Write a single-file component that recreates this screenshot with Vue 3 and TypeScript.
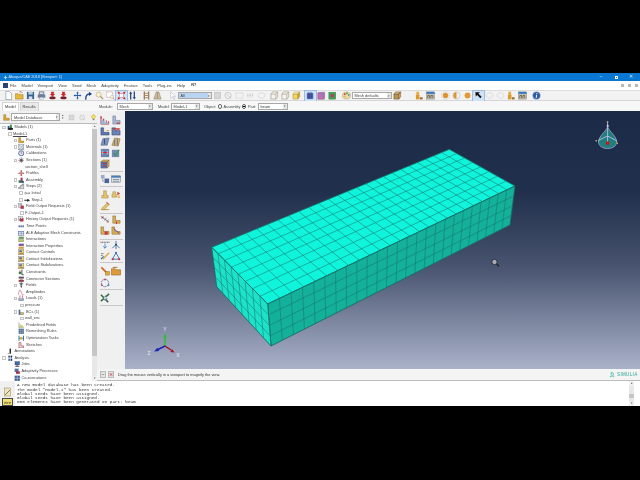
<script setup lang="ts">
type P = [number, number]
function quad(p0: P, p1: P, p2: P, p3: P) {
  const dx1 = p1[0] - p2[0], dx2 = p3[0] - p2[0], sx = p0[0] - p1[0] + p2[0] - p3[0]
  const dy1 = p1[1] - p2[1], dy2 = p3[1] - p2[1], sy = p0[1] - p1[1] + p2[1] - p3[1]
  const den = dx1 * dy2 - dx2 * dy1
  const g = (sx * dy2 - dx2 * sy) / den
  const h = (dx1 * sy - sx * dy1) / den
  const a = p1[0] - p0[0] + g * p1[0], b = p3[0] - p0[0] + h * p3[0]
  const d = p1[1] - p0[1] + g * p1[1], e = p3[1] - p0[1] + h * p3[1]
  return (u: number, v: number): P => {
    const w = g * u + h * v + 1
    return [(a * u + b * v + p0[0]) / w, (d * u + e * v + p0[1]) / w]
  }
}
function face(pts: [P, P, P, P], nu: number, nv: number, fill: string) {
  const m = quad(...pts)
  const segs: { x1: number; y1: number; x2: number; y2: number }[] = []
  const push = (a: P, b: P) => segs.push({ x1: a[0], y1: a[1], x2: b[0], y2: b[1] })
  for (let i = 0; i <= nu; i++) push(m(i / nu, 0), m(i / nu, 1))
  for (let j = 0; j <= nv; j++) push(m(0, j / nv), m(1, j / nv))
  return { points: pts.map((p) => p.join(',')).join(' '), fill, segs }
}
const A: P = [211.7, 247.3], B: P = [449.3, 149.3], C: P = [515, 186], D: P = [267.7, 304]
const Cb: P = [510, 225], Db: P = [271, 346], Ab: P = [216.7, 286.7]
const faces = [
  face([A, B, C, D], 25, 8, '#0ff4db'),
  face([D, C, Cb, Db], 25, 4, '#13b09a'),
  face([A, D, Db, Ab], 8, 4, '#1be2c8'),
]

type Item = { k: 'i' | 's' | 'c'; id?: string; w?: number; on?: boolean; text?: string; blue?: boolean }
const ic = (id: string, on = false): Item => ({ k: 'i', id, on })
const sp = (w = 3): Item => ({ k: 's', w })
const toolbar: Item[] = [
  ic('doc'), ic('folder'), ic('save'), ic('print'), ic('imp'), ic('imp'), sp(),
  ic('pan'), ic('rot'), ic('mag'), ic('boxz'), ic('fit', true), ic('updn'), sp(),
  ic('ladder'), ic('tri'), sp(4), ic('cursor'),
  { k: 'c', text: 'All', w: 34.5, blue: true },
  ic('g1'), ic('g2'), ic('g3'), ic('g4'), ic('g5'), sp(1.5),
  ic('boxw'), ic('boxw'), ic('boxy'), sp(3),
  ic('meshb', true), ic('meshp'), ic('meshg'), sp(3), ic('palette'),
  { k: 'c', text: 'Mesh defaults', w: 40 },
  ic('cube'), sp(11), ic('fig'), ic('vp'), sp(4),
  ic('sph'), ic('hsph'), ic('osph'), ic('blk', true), ic('g5'), ic('g5'), ic('fig'), ic('vp'), sp(3), ic('info'),
]
const menu = ['File', 'Model', 'Viewport', 'View', 'Seed', 'Mesh', 'Adaptivity', 'Feature', 'Tools', 'Plug-ins', 'Help']

type Row = { t: string; l: string; x?: boolean; i?: string; u?: boolean }
const tree: Row[] = [
  { t: 'Models (1)', l: 'l0', x: true, i: 'tmodel' },
  { t: 'Model-1', l: 'lm', x: true, u: true },
  { t: 'Parts (1)', l: 'l2', x: true, i: 'tpart' },
  { t: 'Materials (1)', l: 'l2', x: true, i: 'tmat' },
  { t: 'Calibrations', l: 'l2', i: 'tcal' },
  { t: 'Sections (1)', l: 'l2', x: true, i: 'tsec' },
  { t: 'section_shell', l: 'l3' },
  { t: 'Profiles', l: 'l2', i: 'tprof' },
  { t: 'Assembly', l: 'l2', x: true, i: 'tasm' },
  { t: 'Steps (2)', l: 'l2', x: true, i: 'tstep' },
  { t: 'Initial', l: 'l4', x: true, i: 'tinit' },
  { t: 'Step-1', l: 'l4', x: true, i: 'tstep1' },
  { t: 'Field Output Requests (1)', l: 'l2', x: true, i: 'tout' },
  { t: 'F-Output-1', l: 'l5', x: true },
  { t: 'History Output Requests (1)', l: 'l2', x: true, i: 'thist' },
  { t: 'Time Points', l: 'l2', i: 'ttime' },
  { t: 'ALE Adaptive Mesh Constraints', l: 'l2', i: 'tale' },
  { t: 'Interactions', l: 'l2', i: 'tint' },
  { t: 'Interaction Properties', l: 'l2', i: 'tiprop' },
  { t: 'Contact Controls', l: 'l2', i: 'tcc' },
  { t: 'Contact Initializations', l: 'l2', i: 'tcc' },
  { t: 'Contact Stabilizations', l: 'l2', i: 'tcc' },
  { t: 'Constraints', l: 'l2', i: 'tcon' },
  { t: 'Connector Sections', l: 'l2', i: 'tconn' },
  { t: 'Fields', l: 'l2', x: true, i: 'tfield' },
  { t: 'Amplitudes', l: 'l2', i: 'tamp' },
  { t: 'Loads (1)', l: 'l2', x: true, i: 'tload' },
  { t: 'pressure', l: 'l5', x: true },
  { t: 'BCs (1)', l: 'l2', x: true, i: 'tbc' },
  { t: 'wall_enc', l: 'l5', x: true },
  { t: 'Predefined Fields', l: 'l2', i: 'tpre' },
  { t: 'Remeshing Rules', l: 'l2', i: 'trem' },
  { t: 'Optimization Tasks', l: 'l2', i: 'topt' },
  { t: 'Sketches', l: 'l2', i: 'tsk' },
  { t: 'Annotations', l: 'l0 nox', i: 'tann' },
  { t: 'Analysis', l: 'l0', x: true, i: 'tana' },
  { t: 'Jobs', l: 'l6', i: 'tjob' },
  { t: 'Adaptivity Processes', l: 'l6', i: 'tada' },
  { t: 'Co-executions', l: 'l6', i: 'tco' },
]

const toolGroups: { cls: string; rows: string[][] }[] = [
  { cls: 'g-a', rows: [['s1', 's2'], ['s3', 's4'], ['s5', 's6'], ['s7', 's8'], ['s9']] },
  { cls: 'g-b', rows: [['s10', 's11']] },
  { cls: 'g-c', rows: [['s12', 's13'], ['s14']] },
  { cls: 'g-d', rows: [['s15', 's16'], ['s17', 's18']] },
  { cls: 'g-e', rows: [['s19', 's20'], ['s21', 's22']] },
  { cls: 'g-f', rows: [['s23', 's25'], ['s26']] },
  { cls: 'g-g', rows: [['s24']] },
]

const messages = [
  'A new model database has been created.',
  'The model "Model-1" has been created.',
  'Global seeds have been assigned.',
  'Global seeds have been assigned.',
  '800 elements have been generated on part: beam',
]
</script>

<template>
  <div class="page">
    <svg class="defs" xmlns="http://www.w3.org/2000/svg">
      <defs>
        <symbol id="doc" viewBox="0 0 10 10"><path d="M2 .5h4l2.500 2.500v6.500h-6.500z" fill="#fff" stroke="#8a8f98" stroke-width=".7"/></symbol>
        <symbol id="folder" viewBox="0 0 10 10"><path d="M.5 3h3l1 1h4.500v5h-8.500z" fill="#e8b83a" stroke="#8c6a1c" stroke-width=".5"/><path d="M5 .8l2 .2 1 1" stroke="#c0392b" fill="none" stroke-width=".8"/></symbol>
        <symbol id="save" viewBox="0 0 10 10"><rect x="1" y="1" width="8" height="8" fill="#35618f"/><rect x="2.500" y="1" width="5" height="3" fill="#bcd"/><rect x="3" y="6" width="4" height="3" fill="#dde"/></symbol>
        <symbol id="print" viewBox="0 0 10 10"><rect x="2.500" y="1" width="5" height="3" fill="#dfe3ea" stroke="#778"/><rect x=".8" y="4" width="8.400" height="3.500" fill="#6d7f9c"/><rect x="2.500" y="7" width="5" height="2" fill="#f4f4f4" stroke="#778" stroke-width=".4"/></symbol>
        <symbol id="imp" viewBox="0 0 10 10"><path d="M3.500.8h3v2.500h1.500l-3 2.700-3-2.700h1.500z" fill="#d3262b"/><ellipse cx="5" cy="7.500" rx="3.500" ry="1.800" fill="#7a1f2a"/></symbol>
        <symbol id="pan" viewBox="0 0 10 10"><path d="M5 .5l1.500 2h-1v2h2v-1l2 1.500-2 1.500v-1h-2v2h1l-1.500 2-1.500-2h1v-2h-2v1l-2-1.500 2-1.500v1h2v-2h-1z" fill="#2c5cae"/></symbol>
        <symbol id="rot" viewBox="0 0 10 10"><path d="M2 9.500c-.5-4 1.500-6 4-6.300" fill="none" stroke="#1c3f8c" stroke-width="1.500"/><path d="M5.500.8l3.500 2.500-3.500 2.200z" fill="#1c3f8c"/></symbol>
        <symbol id="mag" viewBox="0 0 10 10"><circle cx="4" cy="4" r="2.800" fill="#fbf3cf" stroke="#b9a77a" stroke-width=".7"/><path d="M6 6l3 3" stroke="#a58b55" stroke-width="1.200"/></symbol>
        <symbol id="boxz" viewBox="0 0 10 10"><rect x=".8" y="1" width="6.500" height="6" fill="#fff" stroke="#a55" stroke-width=".5" stroke-dasharray="1 .6"/><circle cx="6.500" cy="6.500" r="1.800" fill="#fbf3cf" stroke="#a99" stroke-width=".5"/><path d="M8 8l1.500 1.500" stroke="#a58b55"/></symbol>
        <symbol id="fit" viewBox="0 0 10 10"><rect x="3" y="3" width="4" height="4" fill="#fff" stroke="#b33" stroke-width=".4"/><path d="M.5.500l3 1-2 2zM9.500.5l-3 1 2 2zM.5 9.500l3-1-2-2zM9.500 9.500l-3-1 2-2z" fill="#d2232a"/></symbol>
        <symbol id="updn" viewBox="0 0 10 10"><path d="M3 .5l1.800 2.500h-1.100v6.500h-1.400v-6.500h-1.100z" fill="#23437e"/><path d="M7 9.500l1.800-2.500h-1.100v-6.500h-1.400v6.500h-1.100z" fill="#23437e"/></symbol>
        <symbol id="ladder" viewBox="0 0 10 10"><path d="M2.500.5v9M7.500.5v9" stroke="#6d4b2a" stroke-width="1"/><path d="M2.500 2.500h5M2.500 5h5M2.500 7.500h5" stroke="#a88350" stroke-width="1"/></symbol>
        <symbol id="tri" viewBox="0 0 10 10"><path d="M3.500 1h3l2.500 8h-8z" fill="#cdbb9d" stroke="#85735a" stroke-width=".5"/><path d="M5 1v8" stroke="#85735a" stroke-width=".5"/></symbol>
        <symbol id="cursor" viewBox="0 0 10 10"><path d="M3 .8v7.500l2-1.800 1.500 3 1-.5-1.500-2.800h2.500z" fill="#fff" stroke="#b0b0b0" stroke-width=".6"/></symbol>
        <symbol id="g1" viewBox="0 0 10 10"><rect x="1.500" y="1.500" width="7" height="7" fill="#d8d8d8" stroke="#b8b8b8" stroke-width=".6"/></symbol>
        <symbol id="g2" viewBox="0 0 10 10"><circle cx="4.500" cy="5" r="3.500" fill="none" stroke="#bbb" stroke-width=".8"/><path d="M2.500 3l5 5" stroke="#bbb" stroke-width=".8"/></symbol>
        <symbol id="g3" viewBox="0 0 10 10"><rect x="1" y="2" width="8" height="6" fill="none" stroke="#c0c0c0" stroke-width=".6" stroke-dasharray="1 .5"/></symbol>
        <symbol id="g4" viewBox="0 0 10 10"><path d="M2 3v4M4.500 3v4M7 3v4" stroke="#bbb" stroke-width="1.100" stroke-dasharray="1 .6"/></symbol>
        <symbol id="g5" viewBox="0 0 10 10"><ellipse cx="5" cy="5" rx="3.800" ry="3" fill="none" stroke="#c6c6c6" stroke-width=".7" stroke-dasharray="2 .6"/></symbol>
        <symbol id="boxw" viewBox="0 0 10 10"><path d="M1 3.500h5.500v5.500h-5.500zM1 3.500l2-2.500h5.500v5.500l-2 2.500M6.500 3.500l2-2.500" fill="none" stroke="#9e8d6c" stroke-width=".6"/></symbol>
        <symbol id="boxy" viewBox="0 0 10 10"><path d="M1 3.500h5.500v5.500h-5.500z" fill="#f2d55a" stroke="#8e7a2c" stroke-width=".4"/><path d="M1 3.500l2-2.500h5.500l-2 2.500z" fill="#fbea9a" stroke="#8e7a2c" stroke-width=".4"/><path d="M6.500 3.500l2-2.500v5.500l-2 2.500z" fill="#c9a733" stroke="#8e7a2c" stroke-width=".4"/></symbol>
        <symbol id="meshb" viewBox="0 0 10 10"><rect x="1" y="2" width="7" height="7" fill="#5d6fb6"/><path d="M3.300 1v8M5.600 1v8M1 4.300h7M1 6.600h7" stroke="#27356f" stroke-width=".6"/></symbol>
        <symbol id="meshp" viewBox="0 0 10 10"><rect x="1" y="2" width="7" height="7" fill="#cf6ea8" stroke="#6b3f8a" stroke-width=".6"/><rect x="3" y="1" width="6" height="6" fill="#9a78b8" opacity=".7"/></symbol>
        <symbol id="meshg" viewBox="0 0 10 10"><rect x="1" y="1.500" width="7.500" height="7.500" fill="#3da84a" stroke="#1d6b2b" stroke-width=".5"/><rect x="3" y="3.500" width="3.500" height="3.500" fill="#b23b7d"/></symbol>
        <symbol id="palette" viewBox="0 0 10 10"><ellipse cx="5" cy="5" rx="4.500" ry="3.800" fill="#e9d9a9" stroke="#8f7a44" stroke-width=".4"/><circle cx="3" cy="3.500" r=".9" fill="#d22"/><circle cx="5.500" cy="2.700" r=".9" fill="#2a2"/><circle cx="7.500" cy="4.500" r=".9" fill="#27c"/><circle cx="3" cy="6" r=".9" fill="#db2"/></symbol>
        <symbol id="cube" viewBox="0 0 10 10"><path d="M1 3.500h5.500v5.500h-5.500z" fill="#b9934f" stroke="#5d4420" stroke-width=".5"/><path d="M1 3.500l2-2.500h5.500l-2 2.500zM6.500 3.500l2-2.500v5.500l-2 2.500z" fill="#d7b474" stroke="#5d4420" stroke-width=".5"/></symbol>
        <symbol id="fig" viewBox="0 0 10 10"><rect x="1.500" y=".8" width="3" height="3" fill="#e8a93b"/><rect x="1" y="3.800" width="4" height="5.500" fill="#dc9a2c"/><rect x="5.500" y="7" width="3" height="2.300" fill="#9a6d2a"/></symbol>
        <symbol id="vp" viewBox="0 0 10 10"><rect x=".5" y="1" width="9" height="8" fill="#c8c2ae" stroke="#5f6a72" stroke-width=".4"/><rect x=".5" y="1" width="9" height="2.200" fill="#3a79c4"/><path d="M2 8v-3h2v3M5.500 8v-3h2v3" stroke="#5b513c" stroke-width=".8" fill="none"/></symbol>
        <symbol id="sph" viewBox="0 0 10 10"><circle cx="5" cy="5" r="3" fill="#dd9433"/><circle cx="5" cy="5" r="4.300" fill="none" stroke="#aaa" stroke-width=".5" stroke-dasharray="1 .7"/></symbol>
        <symbol id="hsph" viewBox="0 0 10 10"><circle cx="5" cy="5" r="4" fill="#f4f4f4" stroke="#aaa" stroke-width=".5"/><path d="M5 1.500a3.500 3.500 0 0 0 0 7z" fill="#dd9433"/></symbol>
        <symbol id="osph" viewBox="0 0 10 10"><circle cx="5" cy="5" r="3.200" fill="#e09a36"/></symbol>
        <symbol id="blk" viewBox="0 0 10 10"><path d="M1.500 1.500h5l-1.500 1.500 3.500 3.500-1.500 1.500-3.500-3.500-1.500 1.500z" fill="#111"/></symbol>
        <symbol id="info" viewBox="0 0 10 10"><circle cx="5" cy="5" r="4.300" fill="#2c5ba8" stroke="#b7c6e0" stroke-width=".5"/><path d="M5.400 2.200v1M5.200 4.200l-.5 3.500" stroke="#fff" stroke-width="1.100"/></symbol>

        <symbol id="tmodel" viewBox="0 0 10 10"><rect x="1" y="3" width="3" height="6" fill="#2f5d9a"/><rect x="4.500" y="1" width="3" height="8" fill="#40903f"/><rect x="2" y="6" width="7" height="3" fill="#1d1d1d"/></symbol>
        <symbol id="tpart" viewBox="0 0 10 10"><path d="M1 1h3v5h5v3h-8z" fill="#dba72d" stroke="#6d5415" stroke-width=".5"/></symbol>
        <symbol id="tmat" viewBox="0 0 10 10"><rect x="1" y="1" width="8" height="8" fill="#dfe6ee" stroke="#667" stroke-width=".5"/><path d="M1 9l8-8M1 4l3-3M5 9l4-4" stroke="#556" stroke-width=".7"/></symbol>
        <symbol id="tcal" viewBox="0 0 10 10"><circle cx="5" cy="5" r="4" fill="#dce6f4" stroke="#1f3d8a" stroke-width="1"/><path d="M5 2.500v2.500l2 1" stroke="#b22" stroke-width=".7" fill="none"/></symbol>
        <symbol id="tsec" viewBox="0 0 10 10"><circle cx="5" cy="5" r="2.400" fill="#d88a2c"/><path d="M5 .5v9M.5 5h9M2 2l6 6M8 2l-6 6" stroke="#3c3c6e" stroke-width=".8"/></symbol>
        <symbol id="tprof" viewBox="0 0 10 10"><path d="M5 .5v9M.5 5h9" stroke="#a33b3b" stroke-width="1.800"/><circle cx="5" cy="5" r="2" fill="#d88" /></symbol>
        <symbol id="tasm" viewBox="0 0 10 10"><rect x="1" y="5" width="4" height="4" fill="#3a7a3c"/><rect x="4" y="1" width="3" height="6" fill="#9b2f5e"/><rect x="5" y="6" width="4" height="3" fill="#2c4a8c"/></symbol>
        <symbol id="tstep" viewBox="0 0 10 10"><path d="M1 9v-2.500h2.700v-2.500h2.700v-2.500h2.600v7.500z" fill="#cfd4da" stroke="#333" stroke-width=".6"/></symbol>
        <symbol id="tinit" viewBox="0 0 10 10"><circle cx="2.500" cy="5" r="1.400" fill="#fff" stroke="#222" stroke-width=".6"/><path d="M4 5h5M7.500 3.500l1.500 1.500-1.500 1.500" stroke="#222" stroke-width=".7" fill="none"/></symbol>
        <symbol id="tstep1" viewBox="0 0 10 10"><path d="M.5 5h5" stroke="#222" stroke-width="1.800"/><path d="M5 2.500l4.500 2.500-4.500 2.500z" fill="#222"/></symbol>
        <symbol id="tout" viewBox="0 0 10 10"><rect x="1" y="1" width="5" height="6" fill="#d8dde6" stroke="#555" stroke-width=".5"/><rect x="4" y="4" width="5" height="5" fill="#b23a48"/><path d="M2 3h3" stroke="#225" stroke-width=".6"/></symbol>
        <symbol id="thist" viewBox="0 0 10 10"><rect x="1" y="1" width="6" height="6" fill="#d8dde6" stroke="#555" stroke-width=".5"/><path d="M2 5.500l2-3 1.500 2 3-2v6h-5" fill="#a8324a"/></symbol>
        <symbol id="ttime" viewBox="0 0 10 10"><path d="M.5 5h9M2 3v4M5 3v4M8 3v4" stroke="#274a8e" stroke-width=".9"/></symbol>
        <symbol id="tale" viewBox="0 0 10 10"><rect x="1" y="2" width="8" height="6" fill="#e7eaf0" stroke="#3f5a96" stroke-width=".8"/><path d="M1 5h8M5 2v6" stroke="#3f5a96" stroke-width=".6"/></symbol>
        <symbol id="tint" viewBox="0 0 10 10"><rect x="1" y="1" width="8" height="3.500" fill="#6a9c5d"/><rect x="1" y="5.500" width="8" height="3.500" fill="#c0c56a" stroke="#555" stroke-width=".4"/></symbol>
        <symbol id="tiprop" viewBox="0 0 10 10"><rect x="1" y="1" width="8" height="3.500" fill="#7d5aa0"/><rect x="1" y="5.500" width="8" height="3.500" fill="#d0a44a"/></symbol>
        <symbol id="tcc" viewBox="0 0 10 10"><rect x="1" y="1" width="8" height="8" fill="#e9d65f" stroke="#6a6a8c" stroke-width=".6"/><rect x="2" y="2" width="4" height="3" fill="#5b67b0"/><path d="M2 7h6" stroke="#a33" stroke-width=".9"/></symbol>
        <symbol id="tcon" viewBox="0 0 10 10"><path d="M6 1v8h3" stroke="#222" stroke-width="1.200" fill="none"/><circle cx="3" cy="6" r="2" fill="#3f7a3e"/><path d="M3 2v2" stroke="#c33" stroke-width="1.200"/></symbol>
        <symbol id="tconn" viewBox="0 0 10 10"><rect x="1" y="1" width="8" height="3" fill="#59506f"/><rect x="3" y="4" width="4" height="2" fill="#c9a06a"/><rect x="1" y="6" width="8" height="3" fill="#8e3c48"/></symbol>
        <symbol id="tfield" viewBox="0 0 10 10"><path d="M5 .5v5M2 2l6 0M3 3.500h4" stroke="#222" stroke-width=".9"/><path d="M3.500 5.500h3l-1.500 4z" fill="#3a3a3a"/></symbol>
        <symbol id="tamp" viewBox="0 0 10 10"><path d="M.5 9c1.500-9 3-9 4.500-4s2.500 5 4.500 3" fill="none" stroke="#b14c6f" stroke-width=".9"/></symbol>
        <symbol id="tload" viewBox="0 0 10 10"><rect x="1" y="5.500" width="8" height="3.500" fill="#9fb1cf" stroke="#456" stroke-width=".4"/><path d="M3 .5v4.500M7 .5v4.500" stroke="#c12a3c" stroke-width="1"/></symbol>
        <symbol id="tbc" viewBox="0 0 10 10"><rect x="1" y="1" width="2.500" height="8" fill="#45689e"/><rect x="3.500" y="5.500" width="5.500" height="3.500" fill="#d0b36a" stroke="#555" stroke-width=".4"/></symbol>
        <symbol id="tpre" viewBox="0 0 10 10"><path d="M1.500 1v8h8" fill="none" stroke="#444" stroke-width=".7"/><path d="M2.500 3l2.500 2 3 .5v3h-5.500z" fill="#c7cc6a"/></symbol>
        <symbol id="trem" viewBox="0 0 10 10"><rect x="1" y="1" width="8" height="8" fill="#45668f"/><path d="M3.500 1v8M6.500 1v8M1 3.500h8M1 6.500h8" stroke="#d5dde8" stroke-width=".5"/></symbol>
        <symbol id="topt" viewBox="0 0 10 10"><path d="M1.500 1v8M8.500 1v8M1.500 5h7" stroke="#2c6d9c" stroke-width="1.400"/><rect x="3.500" y="3" width="3" height="4" fill="#e0b22a"/></symbol>
        <symbol id="tsk" viewBox="0 0 10 10"><path d="M1.500 1v8h7v-3h-4v-5z" fill="#f3e6e6" stroke="#a22b3a" stroke-width=".9"/></symbol>
        <symbol id="tann" viewBox="0 0 10 10"><path d="M5 .5l1 1v6l-1 2-1-2v-6z" fill="#111"/><path d="M1 9l3-1" stroke="#333" stroke-width=".8"/></symbol>
        <symbol id="tana" viewBox="0 0 10 10"><rect x="2" y="1" width="2.500" height="3" fill="#2c4a8c"/><rect x="5.500" y="1" width="2.500" height="3" fill="#222"/><rect x="2" y="5.500" width="2.500" height="3.500" fill="#3a6fb0"/><rect x="5.500" y="5.500" width="2.500" height="3.500" fill="#1a3266"/></symbol>
        <symbol id="tjob" viewBox="0 0 10 10"><rect x="1.500" y="1" width="7" height="5" fill="#3b68b8" stroke="#223" stroke-width=".5"/><rect x="3.500" y="6" width="3" height="1.500" fill="#888"/><rect x="2" y="7.500" width="6" height="1.500" fill="#555"/></symbol>
        <symbol id="tada" viewBox="0 0 10 10"><rect x="1" y="1" width="6" height="5" fill="#4a70ac"/><rect x="3" y="5" width="6" height="4" fill="#a03a50"/></symbol>
        <symbol id="tco" viewBox="0 0 10 10"><rect x="1" y="1" width="8" height="8" fill="#3b5e9c"/><path d="M5 1v8M1 5h8" stroke="#e4e4e4" stroke-width=".8"/></symbol>

        <symbol id="s1" viewBox="0 0 11 11"><path d="M1 1v9h9" fill="none" stroke="#b04a56" stroke-width="1"/><path d="M1 5h4v3h5v2h-9z" fill="#9fb0d2"/><path d="M1.500 2v2M4 4v2M7 6v2M9.500 7v2" stroke="#d21f2b" stroke-width="1" /></symbol>
        <symbol id="s2" viewBox="0 0 11 11"><path d="M2 1h3v5h5v4h-8z" fill="#a9b6d2" stroke="#5c6a8e" stroke-width=".5"/><path d="M6 9h4" stroke="#c23" stroke-width="1"/></symbol>
        <symbol id="s3" viewBox="0 0 11 11"><path d="M1 2h3v5h6v3h-9z" fill="#5c77ad" stroke="#2e3d66" stroke-width=".5"/><path d="M7 5h3" stroke="#d9a227" stroke-width="1"/></symbol>
        <symbol id="s4" viewBox="0 0 11 11"><path d="M1 2h4v3h5v5h-9z" fill="#6a83b5" stroke="#2e3d66" stroke-width=".5"/><path d="M5 5l5-2M2 3h7" stroke="#c82832" stroke-width="1"/></symbol>
        <symbol id="s5" viewBox="0 0 11 11"><path d="M1 9l2-7 7-1-2 8z" fill="#7e93bd" stroke="#3d4d75" stroke-width=".5"/><path d="M5 2v6" stroke="#2d3b60" stroke-width=".8"/></symbol>
        <symbol id="s6" viewBox="0 0 11 11"><path d="M1 9l3-8 6 1-2 8z" fill="#d8b266" stroke="#6b5a2a" stroke-width=".5"/><path d="M4 3v6M7 2v7" stroke="#5d74a8" stroke-width="1"/></symbol>
        <symbol id="s7" viewBox="0 0 11 11"><rect x="1" y="1" width="9" height="9" fill="#6c82ae"/><path d="M2 5h7" stroke="#d21f2b" stroke-width="1.100"/><path d="M3 3v4M8 3v4" stroke="#fff" stroke-width=".6"/></symbol>
        <symbol id="s8" viewBox="0 0 11 11"><rect x="1" y="2" width="8" height="8" fill="#7389b4"/><path d="M3 6l2 2 4-6" stroke="#2e9c3f" stroke-width="1.200" fill="none"/></symbol>
        <symbol id="s9" viewBox="0 0 11 11"><path d="M1 3h7v7h-7z" fill="#5e78ad" stroke="#2e3d66" stroke-width=".4"/><path d="M1 3l2-2h7l-2 2zM8 3l2-2v7l-2 2z" fill="#cfa95d" stroke="#6b5a2a" stroke-width=".4"/><path d="M3 5h4M3 7.500h4" stroke="#d21f2b" stroke-width=".8"/></symbol>
        <symbol id="s10" viewBox="0 0 11 11"><rect x="1" y="1" width="4" height="4" fill="#9eaacb"/><rect x="5" y="5" width="5" height="5" fill="#48639b"/><path d="M3 5v3h2" stroke="#666" stroke-width=".6" fill="none"/></symbol>
        <symbol id="s11" viewBox="0 0 11 11"><rect x=".5" y="2" width="10" height="7" fill="#e0e4ea" stroke="#5d6c7e" stroke-width=".5"/><rect x=".5" y="2" width="10" height="2" fill="#477bb5"/><path d="M2 6h7M2 8h7" stroke="#4a5568" stroke-width=".6"/></symbol>
        <symbol id="s12" viewBox="0 0 11 11"><path d="M2 10h7v-3h-2v-5h-3v5h-2z" fill="#e3c36b" stroke="#85682a" stroke-width=".4"/></symbol>
        <symbol id="s13" viewBox="0 0 11 11"><path d="M1 9h5v-3h-1v-3h-3v3h-1z" fill="#e3c36b" stroke="#85682a" stroke-width=".4"/><path d="M7 3l3 2-3 2z" fill="#c33"/><path d="M7 10h3v-3h-3z" fill="#e3c36b"/></symbol>
        <symbol id="s14" viewBox="0 0 11 11"><path d="M1 9h9v1h-9z" fill="#b88b3c"/><path d="M2 8l6-6 2 2-6 6z" fill="#e3c36b" stroke="#85682a" stroke-width=".4"/><path d="M7 1l3 3" stroke="#c8384a" stroke-width="1"/></symbol>
        <symbol id="s15" viewBox="0 0 11 11"><path d="M1 1.500l9 6.500" stroke="#2e4d8c" stroke-width=".8"/><path d="M2 4l2-3M5 6l2-3M7.500 8l2-3" stroke="#555" stroke-width=".6"/><rect x="2" y="2" width="1.500" height="1.500" fill="#d22"/><rect x="7.500" y="7" width="1.500" height="1.500" fill="#d8a22a"/></symbol>
        <symbol id="s16" viewBox="0 0 11 11"><path d="M2 1h3v5h5v3h-8z" fill="#dcb050" stroke="#6b5a2a" stroke-width=".5"/><path d="M6 7v3" stroke="#d22" stroke-width="1"/></symbol>
        <symbol id="s17" viewBox="0 0 11 11"><path d="M1 1h3v5h6v3h-9z" fill="#dcb050" stroke="#6b5a2a" stroke-width=".5"/><rect x="5" y="6" width="3.500" height="3.500" fill="#c8384a"/></symbol>
        <symbol id="s18" viewBox="0 0 11 11"><path d="M1 1h3v5h6v3h-9z" fill="#dcb050" stroke="#6b5a2a" stroke-width=".5"/><path d="M3 3l6 5" stroke="#7a3fa0" stroke-width="1.100"/></symbol>
        <symbol id="s19" viewBox="0 0 11 11"><path d="M.5 2.500h10" stroke="#556" stroke-width="1.100" stroke-dasharray="1.200 .6"/><path d="M5.500 4v5M3.500 7l2 2 2-2" stroke="#3a79c4" stroke-width=".9" fill="none"/></symbol>
        <symbol id="s20" viewBox="0 0 11 11"><path d="M5.500 5v5M5.500 5l-4 4M5.500 5l4 4M5.500 1v4" stroke="#3e6fae" stroke-width="1"/><circle cx="5.500" cy="5" r="1" fill="#234"/></symbol>
        <symbol id="s21" viewBox="0 0 11 11"><path d="M1 3h3M1 5h2" stroke="#555" stroke-width=".7"/><path d="M3 9l3-3 4-4" stroke="#d9a93e" stroke-width="1.600" fill="none"/><path d="M1 9l3-3" stroke="#2f6bb5" stroke-width="1.200"/></symbol>
        <symbol id="s22" viewBox="0 0 11 11"><path d="M5.500 2l4 7h-8z" fill="none" stroke="#3573b8" stroke-width="1"/><circle cx="5.500" cy="2" r="1.200" fill="#3573b8"/><circle cx="1.800" cy="9" r="1.200" fill="#c8384a"/><circle cx="9" cy="9" r="1.200" fill="#c8384a"/></symbol>
        <symbol id="s23" viewBox="0 0 11 11"><path d="M1.500 1.500l6 6" stroke="#d66a2a" stroke-width="2"/><rect x="6" y="6" width="4.500" height="4" fill="#d9a93e" stroke="#7c5b1b" stroke-width=".4"/></symbol>
        <symbol id="s24" viewBox="0 0 11 11"><path d="M1 9l9-8M1 2l8 8" stroke="#3a6b3f" stroke-width="1.700"/><path d="M4 6l3-3M5 8l3-2" stroke="#5b7fb0" stroke-width="1.400"/><circle cx="5.500" cy="5.500" r="1.300" fill="#c9d6c0"/></symbol>
        <symbol id="s25" viewBox="0 0 11 11"><path d="M.5 3h4l1 1.200h5v5.800h-10z" fill="#dd9a3a" stroke="#7b4f16" stroke-width=".5"/><path d="M2 1.500h5" stroke="#aa6a20" stroke-width="1"/></symbol>
        <symbol id="s26" viewBox="0 0 11 11"><circle cx="5.500" cy="5.500" r="4" fill="none" stroke="#39408e" stroke-width=".8" stroke-dasharray="1.500 .7"/><rect x="4.700" y=".8" width="1.700" height="1.700" fill="#c8384a"/><rect x="1" y="7" width="1.700" height="1.700" fill="#c8384a"/><rect x="8.500" y="7" width="1.700" height="1.700" fill="#3573b8"/></symbol>
      </defs>
    </svg>

    <div class="window">
      <div class="title">
        <svg class="title-ic" viewBox="0 0 10 10"><path d="M5 .5l1.200 3.300 3.300 1.200-3.300 1.200-1.200 3.300-1.200-3.300-3.300-1.200 3.300-1.200z" fill="#cfe4f7"/></svg>
        <span class="title-text">Abaqus/CAE 2018 [Viewport: 1]</span>
        <div class="win-btns"><span class="wb">&#8211;</span><span class="wb"><i class="restore"></i></span><span class="wb">&#10005;</span></div>
      </div>

      <div class="menu">
        <span class="menu-ic"></span>
        <span v-for="m in menu" :key="m">{{ m }}</span>
        <b class="menu-n">N?</b>
        <div class="mdi"><i></i><i></i><i></i></div>
      </div>

      <div class="toolbar">
        <template v-for="(it, n) in toolbar" :key="n">
          <span v-if="it.k === 'i'" class="tb-cell" :class="{ on: it.on }"><svg class="tb-ic"><use :href="'#' + it.id" /></svg></span>
          <span v-else-if="it.k === 's'" class="tb-sep" :style="{ width: it.w + 'px' }"></span>
          <span v-else class="combo" :class="{ blue: it.blue }" :style="{ width: it.w + 'px' }">
            <span class="combo-text">{{ it.text }}</span><span class="combo-arrow">&#9662;</span>
          </span>
        </template>
      </div>

      <div class="context">
        <div class="tabs"><span class="tab active">Model</span><span class="tab">Results</span></div>
        <div class="ctx-fields">
          <span class="lbl mod">Module:</span>
          <span class="combo w-mod"><span class="combo-text">Mesh</span><span class="combo-arrow">&#9662;</span></span>
          <span class="lbl mdl">Model:</span>
          <span class="combo w-mdl"><span class="combo-text">Model-1</span><span class="combo-arrow">&#9662;</span></span>
          <span class="lbl obj">Object:</span>
          <span class="radio"></span><span class="lbl">Assembly</span>
          <span class="radio sel"></span><span class="lbl">Part:</span>
          <span class="combo w-part"><span class="combo-text">beam</span><span class="combo-arrow">&#9662;</span></span>
        </div>
      </div>

      <div class="work">
        <aside class="left">
          <div class="tree-head">
            <svg class="th-ic"><use href="#tpart" /></svg>
            <span class="combo w-db"><span class="combo-text">Model Database</span><span class="combo-arrow">&#9662;</span></span>
            <span class="stepper">&#9652;<br />&#9662;</span>
            <svg class="th-ic2"><use href="#g1" /></svg>
            <svg class="th-ic2"><use href="#g2" /></svg>
            <svg class="th-ic2" viewBox="0 0 10 10"><circle cx="5" cy="4" r="2.800" fill="#f7e45a" stroke="#a5921f" stroke-width=".5"/><rect x="3.800" y="6.800" width="2.400" height="2" fill="#7a7a7a"/></svg>
          </div>
          <div class="tree-body">
            <div class="tree">
              <div v-for="r in tree" :key="r.t" class="row" :class="r.l">
                <span class="exp" :class="{ none: !r.x }"></span>
                <svg v-if="r.i" class="row-ic"><use :href="'#' + r.i" /></svg>
                <span class="row-text" :class="{ under: r.u }">{{ r.t }}</span>
              </div>
            </div>
            <div class="scroll"><span class="sb-btn">&#9652;</span><span class="sb-track"><i></i></span><span class="sb-btn">&#9662;</span></div>
          </div>
        </aside>

        <div class="right">
          <div class="mid">
            <div class="toolbox">
              <div v-for="g in toolGroups" :key="g.cls" class="tool-group" :class="g.cls">
                <div v-for="(row, ri) in g.rows" :key="ri" class="tool-row">
                  <svg v-for="s in row" :key="s" class="tool-ic"><use :href="'#' + s" /></svg>
                </div>
              </div>
            </div>
            <div class="viewport">
              <svg class="canvas" viewBox="125 111 515 258" xmlns="http://www.w3.org/2000/svg">
                <g v-for="(f, i) in faces" :key="i">
                  <polygon :points="f.points" :fill="f.fill" stroke="#17605a" stroke-width=".5" />
                  <line v-for="(s, j) in f.segs" :key="j" :x1="s.x1" :y1="s.y1" :x2="s.x2" :y2="s.y2" stroke="#1d6f68" stroke-width=".5" />
                </g>
                <!-- triad -->
                <path d="M165 346v-9" stroke="#27c22a" stroke-width="1.500" />
                <path d="M165 333.500l1.800 4h-3.600z" fill="#27c22a" />
                <path d="M165 346l-7 3.500" stroke="#1620b8" stroke-width="1.500" />
                <path d="M154 351.500l3.400-3.800 1.700 3.200z" fill="#1620b8" />
                <path d="M165 346l6 4" stroke="#a3141e" stroke-width="1.500" />
                <path d="M174.500 352.500l-4.200-.6 1.900-3z" fill="#a3141e" />
                <text x="165" y="331" class="tri-t">Y</text>
                <text x="149" y="355" class="tri-t">Z</text>
                <text x="178" y="357" class="tri-t">X</text>
                <!-- compass -->
                <path d="M607.600 127c2 5 9 9 9 15 0 4-4 6.500-9 6.500s-9-2.500-9-6.500c0-6 7-10 9-15z" fill="#1f7f7d" stroke="#8f92c4" stroke-width="1" />
                <path d="M607.600 122v20M607.600 136l-9.500 4.500M607.600 136l9.500 5" stroke="#b3b4dc" stroke-width="1" fill="none" />
                <rect x="606" y="141.500" width="3.200" height="3.200" fill="#d0101c" />
                <rect x="606.800" y="125" width="1.800" height="1.800" fill="#cfcfe8" />
                <rect x="606.800" y="121" width="1.500" height="1.500" fill="#b7a15a" />
                <rect x="595.500" y="140" width="1.500" height="1.500" fill="#a9b04e" />
                <rect x="616.500" y="142.500" width="1.500" height="1.500" fill="#a9b04e" />
                <!-- magnifier cursor -->
                <circle cx="494.500" cy="262" r="2.700" fill="#a9adb8" stroke="#23262e" stroke-width=".9" />
                <path d="M496.500 264l2.500 2.300" stroke="#20242c" stroke-width="1.300" />
              </svg>
            </div>
          </div>
          <div class="status">
            <span class="st-btn"><svg viewBox="0 0 6 6"><path d="M1 3h4" stroke="#777" stroke-width=".8"/></svg></span>
            <span class="st-btn"><svg viewBox="0 0 6 6"><path d="M1 1l4 4M5 1l-4 4" stroke="#c2222c" stroke-width="1"/></svg></span>
            <span class="st-text">Drag the mouse vertically in a viewport to magnify the view.</span>
            <span class="simulia">
              <svg viewBox="0 0 8 8" class="ds"><path d="M1 7c3 0 5-1.500 5-3.500 0-1.500-1.500-2-3-1.800M3 1v4.500M5 7h2" stroke="#19a894" stroke-width=".9" fill="none"/></svg>
              SIMULIA
            </span>
          </div>
        </div>
      </div>

      <div class="msg">
        <div class="msg-side">
          <span class="msg-btn"><svg viewBox="0 0 10 10"><rect x="1.500" y="1" width="6" height="8" fill="#efe6bf" stroke="#8b8458" stroke-width=".5"/><path d="M2 8l5-5" stroke="#796f3f" stroke-width=".9"/></svg></span>
          <span class="msg-btn sel">&gt;&gt;&gt;</span>
        </div>
        <div class="msg-text">
          <div v-for="(m, i) in messages" :key="i">{{ m }}</div>
        </div>
        <div class="scroll msg-scroll"><span class="sb-btn">&#9652;</span><span class="sb-track"><i class="end"></i></span><span class="sb-btn">&#9662;</span></div>
      </div>
    </div>
  </div>
</template>

<style>
html, body { margin: 0; background: #000; }
</style>

<style scoped>
.page {
  width: 640px; height: 480px; background: #000; overflow: hidden;
  padding-top: 73px; box-sizing: border-box;
  font-family: "Liberation Sans", Arial, sans-serif; color: #333;
}
.defs { display: none; }
.window { height: 333px; display: flex; flex-direction: column; background: #f0f0f0; filter: blur(0.3px); }

.title { height: 8px; background: #0a78d2; color: #fff; display: flex; align-items: center; padding-left: 2.500px; flex: none; }
.title-ic { width: 5px; height: 5px; margin-right: 1px; }
.title-text { font-size: 3.800px; line-height: 8px; color: #d6e8f8; white-space: nowrap; }
.win-btns { margin-left: auto; display: flex; align-items: center; font-size: 4.500px; line-height: 8px; gap: 10px; padding-right: 6.500px; color: #dcecfa; }
.wb { width: 5px; display: flex; justify-content: center; }
.restore { display: block; width: 3px; height: 3px; border: 1px solid #fff; box-sizing: border-box; }

.menu { height: 9px; background: #fff; display: flex; align-items: center; gap: 5px; font-size: 4.050px; line-height: 9px; padding-left: 2.500px; flex: none; color: #444; }
.menu-ic { width: 5px; height: 4.500px; background: #28437e; margin-right: -2.500px; }
.menu-n { font-size: 3.800px; color: #333; margin-left: 1px; }
.mdi { margin-left: auto; display: flex; gap: 4px; padding-right: 2px; }
.mdi i { width: 3px; height: 3px; background: #b8b8b8; display: block; }

.toolbar { height: 11px; display: flex; align-items: center; padding-left: 2.500px; background: #f2f2f2; border-top: 0.500px solid #dcdcdc; border-bottom: 0.500px solid #d6d6d6; box-sizing: border-box; flex: none; }
.tb-cell { width: 11px; height: 10px; display: flex; align-items: center; justify-content: center; flex: none; box-sizing: border-box; }
.tb-cell.on { background: #cfe2f6; outline: 0.500px solid #9cbde0; outline-offset: -0.500px; }
.tb-ic { width: 9px; height: 9px; }
.tb-sep { height: 9px; flex: none; }

.combo { display: inline-flex; align-items: center; height: 7.500px; background: #fff; border: 0.500px solid #a8a8a8; box-sizing: border-box; font-size: 3.900px; flex: none; justify-content: space-between; color: #444; }
.combo.blue { background: #b9d4f2; }
.combo-text { padding-left: 2px; white-space: nowrap; }
.combo-arrow { width: 3.500px; height: 100%; background: #e6e6e6; font-size: 3px; display: flex; align-items: center; justify-content: center; color: #555; }

.context { height: 10px; display: flex; align-items: flex-end; background: #f7f7f7; flex: none; }
.tabs { width: 99px; flex: none; display: flex; gap: 1px; padding-left: 2px; box-sizing: border-box; align-items: flex-end; height: 10px; }
.tab { font-size: 3.900px; line-height: 8px; height: 8px; padding: 0 2px; background: #e9e9e9; border: 0.500px solid #d4d4d4; border-bottom: none; }
.tab.active { background: #fff; }
.ctx-fields { display: flex; align-items: center; height: 9.500px; font-size: 3.900px; gap: 1.500px; }
.lbl { white-space: nowrap; color: #444; }
.mod { width: 16px; }
.w-mod { width: 36px; }
.mdl { margin-left: 4px; width: 11px; }
.w-mdl { width: 29px; }
.obj { margin-left: 3px; width: 12px; }
.w-part { width: 30px; }
.radio { width: 4.500px; height: 4.500px; border-radius: 50%; border: 0.500px solid #666; box-sizing: border-box; background: #fff; flex: none; }
.radio.sel { background: radial-gradient(circle, #111 0 40%, #fff 45%); }

.work { flex: 1; display: flex; min-height: 0; }
.left { width: 97px; flex: none; display: flex; flex-direction: column; background: #f0f0f0; }
.tree-head { height: 12px; display: flex; align-items: center; padding-left: 2.500px; gap: 1.500px; flex: none; }
.th-ic { width: 7px; height: 7px; flex: none; }
.th-ic2 { width: 7px; height: 7px; flex: none; margin-left: 2.500px; }
.w-db { width: 49px; height: 8px; }
.stepper { font-size: 3px; line-height: 3.500px; color: #555; width: 4px; text-align: center; }

.tree-body { flex: 1; display: flex; min-height: 0; border-top: 0.500px solid #bbb; }
.tree { flex: 1; background: #fff; overflow: hidden; }
.row { height: 6.600px; display: flex; align-items: center; font-size: 3.900px; line-height: 6.600px; white-space: nowrap; color: #444; }
.row-ic { width: 6.500px; height: 6.500px; flex: none; margin-right: 1.500px; }
.row-text.under { text-decoration: underline; }
.exp { width: 3.500px; height: 3.500px; border: 0.500px solid #c4c4c4; box-sizing: border-box; background: #fafafa; flex: none; margin-right: 1px; }
.exp.none { visibility: hidden; }
.l0 { padding-left: 2px; }
.l0.nox .exp { visibility: hidden; }
.lm { padding-left: 8px; }
.lm .exp { margin-right: 1.500px; }
.l2 { padding-left: 13.500px; }
.l3 { padding-left: 20.500px; }
.l4 { padding-left: 19px; }
.l5 { padding-left: 20px; }
.l5 .exp { margin-right: 1.500px; }
.l6 { padding-left: 9px; }

.scroll { width: 5px; flex: none; display: flex; flex-direction: column; background: #e8e8e8; }
.sb-btn { height: 5px; font-size: 3px; line-height: 5px; text-align: center; color: #555; background: #f0f0f0; flex: none; }
.sb-track { flex: 1; display: block; }
.sb-track i { display: block; width: 100%; height: 92%; background: #c6c6c6; }
.sb-track i.end { height: 25%; margin-top: 8px; }

.right { flex: 1; display: flex; flex-direction: column; min-width: 0; }
.mid { flex: 1; display: flex; min-height: 0; }
.toolbox { width: 28px; flex: none; padding: 3.500px 0 0 2.500px; box-sizing: border-box; background: #f0f0f0; }
.tool-group { border-bottom: 0.500px solid #c8c8c8; width: 23px; }
.tool-row { height: 11px; display: flex; align-items: center; }
.tool-ic { width: 10px; height: 10px; margin-right: 1px; flex: none; }
.g-a { padding-bottom: 1.500px; }
.g-b { margin-top: 1.500px; padding-bottom: 1px; }
.g-c { margin-top: 1.500px; padding-bottom: 0.500px; }
.g-c .tool-row { height: 12px; }
.g-d { margin-top: 1px; padding-bottom: 2px; }
.g-e { padding-bottom: 0.500px; }
.g-f { margin-top: 2px; }
.g-f .tool-row { height: 12px; }
.g-g { margin-top: 2px; padding-bottom: 2px; }
.viewport { flex: 1; background: linear-gradient(#1b2a47 0%, #21304c 32%, #47536f 60%, #aab2c9 100%); min-width: 0; }
.canvas { display: block; width: 515px; height: 258px; }
.tri-t { font: 5px "Liberation Sans", sans-serif; fill: #e8ecf4; text-anchor: middle; }

.status { height: 12px; flex: none; display: flex; align-items: center; background: #f4f4f4; border-bottom: 1px solid #bdbdbd; box-sizing: border-box; padding-left: 3px; gap: 1.500px; font-size: 3.900px; }
.st-btn { width: 6px; height: 7px; background: #e2e2e2; border: 0.500px solid #bbb; box-sizing: border-box; display: flex; flex: none; }
.st-btn svg { width: 100%; height: 100%; }
.st-text { color: #333; white-space: nowrap; margin-left: 3px; }
.simulia { margin-left: auto; display: flex; align-items: center; gap: 2px; color: #2aa898; font-size: 4.600px; letter-spacing: .3px; padding-right: 2.500px; }
.ds { width: 6px; height: 7px; }

.msg { height: 25px; flex: none; display: flex; background: #fff; }
.msg-side { width: 15px; flex: none; background: #f0f0f0; display: flex; flex-direction: column; align-items: center; justify-content: flex-end; gap: 1px; }
.msg-btn { width: 11px; flex: none; display: flex; align-items: center; justify-content: center; }
.msg-btn svg { width: 10px; height: 10px; }
.msg-btn.sel { height: 8px; background: #f2e070; border: 0.500px solid #4a4a4a; box-sizing: border-box; font-size: 4px; font-weight: 700; color: #222; }
.msg-text { flex: 1; padding: 2.300px 0 0 2px; font: 4.300px/4.200px "Liberation Mono", monospace; color: #333; white-space: pre; overflow: hidden; }
.msg-scroll { margin-right: 6px; }
</style>
